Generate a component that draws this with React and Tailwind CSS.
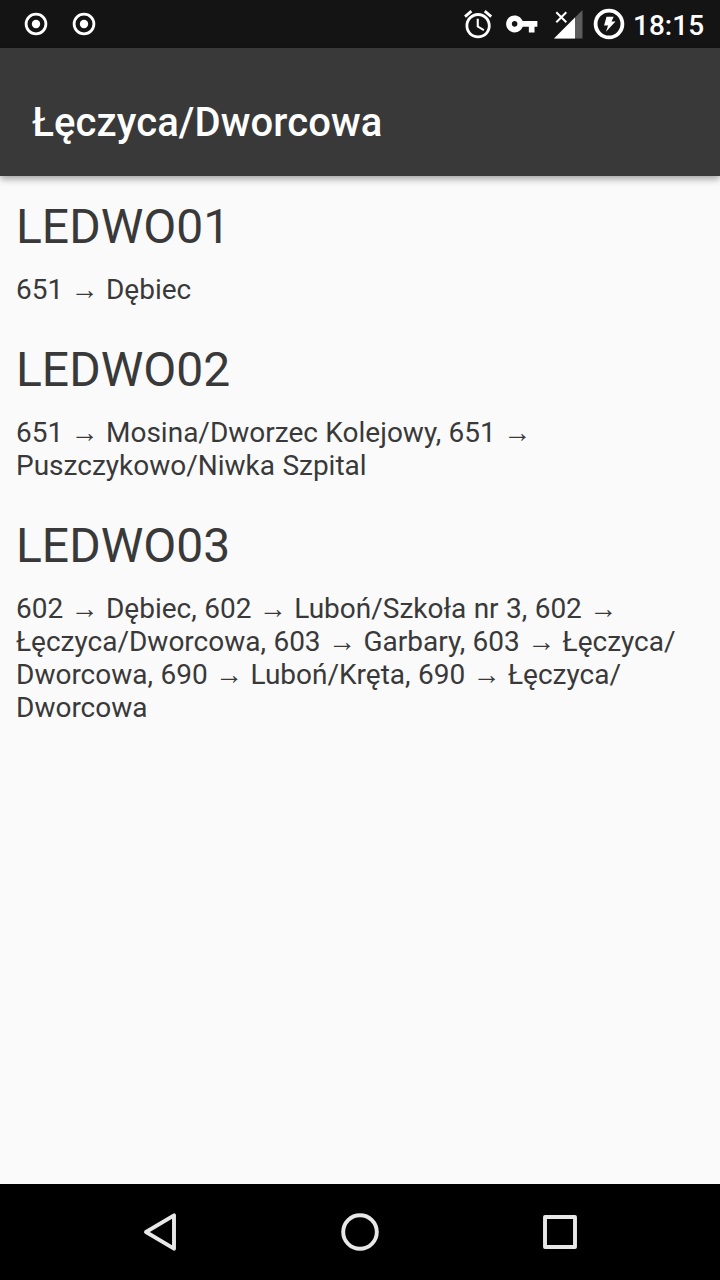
const stops = [
  { id: "LEDWO01", lines: ["651 → Dębiec"] },
  { id: "LEDWO02", lines: ["651 → Mosina/Dworzec Kolejowy, 651 →", "Puszczykowo/Niwka Szpital"] },
  {
    id: "LEDWO03",
    lines: [
      "602 → Dębiec, 602 → Luboń/Szkoła nr 3, 602 →",
      "Łęczyca/Dworcowa, 603 → Garbary, 603 → Łęczyca/",
      "Dworcowa, 690 → Luboń/Kręta, 690 → Łęczyca/",
      "Dworcowa",
    ],
  },
];

function Record() {
  return (
    <svg className="size-6" viewBox="0 0 24 24" fill="none">
      <circle cx="12" cy="12" r="9.9" stroke="#fff" strokeWidth="2.8" />
      <circle cx="12" cy="12" r="4.2" fill="#fff" />
    </svg>
  );
}

function StatusBar() {
  return (
    <div className="flex h-12 shrink-0 items-center bg-[#141414] text-white">
      <div className="flex gap-6 pl-6">
        <Record />
        <Record />
      </div>
      <svg className="ml-auto h-12 w-[170px]" viewBox="460 0 170 48" fill="#fff">
        <g transform="translate(461.3 7.500) scale(1.4)">
          <path d="M22 5.72l-4.6-3.86-1.29 1.53 4.6 3.86L22 5.72zM7.88 3.39L6.6 1.86 2 5.71l1.29 1.53 4.59-3.85zM12.5 8H11v6l4.75 2.85.75-1.23-4-2.37V8zM12 4c-4.97 0-9 4.03-9 9s4.02 9 9 9c4.97 0 9-4.03 9-9s-4.03-9-9-9zm0 16c-3.87 0-7-3.13-7-7s3.13-7 7-7 7 3.13 7 7-3.13 7-7 7z" />
        </g>
        <g transform="translate(504.7 6.9) scale(1.42)">
          <path d="M12.65 10C11.83 7.67 9.61 6 7 6c-3.31 0-6 2.69-6 6s2.69 6 6 6c2.61 0 4.83-1.67 5.65-4H17v4h4v-4h2v-4H12.65zM7 14c-1.1 0-2-.9-2-2s.9-2 2-2 2 .9 2 2-.9 2-2 2z" />
        </g>
        <path d="M582.500 10v28.500h-28.500z" fill="#5c5c5c" />
        <path d="M575 17.500v21h-21z" />
        <path d="M556.300 12.300l10 10m0-10l-10 10" stroke="#fff" strokeWidth="2" />
        <circle cx="609" cy="24" r="13.4" fill="none" stroke="#fff" strokeWidth="3.8" />
        <path d="M606.500 16.700h7.200l-2.200 4.800h4l-9.500 10.200 2.100-6.300h-4z" />
      </svg>
      <span className="w-[90px] pt-[3px] pl-[3px] text-[28px] leading-8 font-medium">18:15</span>
    </div>
  );
}

export default function App() {
  return (
    <div className="flex h-[1280px] w-[720px] flex-col bg-[#fafafa] font-[Roboto,sans-serif] text-[#393939]">
      <StatusBar />
      <header className="flex h-32 shrink-0 items-center bg-[#393939] px-8 pt-[22px] text-white shadow-[0_3px_7px_rgba(0,0,0,0.36)]">
        <h1 className="text-[40px] leading-[48px] font-medium tracking-[0.1px]">Łęczyca/Dworcowa</h1>
      </header>
      <main className="flex-1 px-4 pt-[23px]">
        {stops.map((stop) => (
          <section key={stop.id} className="mb-9">
            <h2 className="text-[48px] leading-[56px]">{stop.id}</h2>
            <div className="mt-[18px] text-[28px] leading-[33px] [word-spacing:0.45px]">
              {stop.lines.map((line) => (
                <p key={line} className="whitespace-nowrap">{line}</p>
              ))}
            </div>
          </section>
        ))}
      </main>
      <nav className="flex h-24 shrink-0 items-center bg-black">
        <svg className="h-24 w-[720px]" viewBox="0 1184 720 96" fill="none" stroke="#e8e8e8" strokeWidth="3.9" strokeLinejoin="round">
          <path d="M174 1215.300v33.400l-28-16.700z" />
          <circle cx="360" cy="1232" r="16.800" />
          <rect x="545" y="1217" width="30" height="30" />
        </svg>
      </nav>
    </div>
  );
}
